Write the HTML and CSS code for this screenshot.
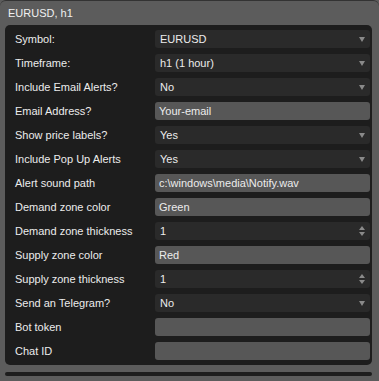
FILE: index.html
```html
<!DOCTYPE html>
<html lang="en">
<head>
  <meta charset="UTF-8">
  <title>EURUSD, h1</title>
  <link rel="stylesheet" href="styles.css">
</head>
<body>
  <div class="window">
    <div class="title">EURUSD, h1</div>

    <div class="panel">
      <div class="row"><span class="label">Symbol:</span><div class="field select"><span>EURUSD</span><i class="down"></i></div></div>
      <div class="row"><span class="label">Timeframe:</span><div class="field select"><span>h1 (1 hour)</span><i class="down"></i></div></div>
      <div class="row"><span class="label">Include Email Alerts?</span><div class="field select"><span>No</span><i class="down"></i></div></div>
      <div class="row"><span class="label">Email Address?</span><div class="field text"><span>Your-email</span></div></div>
      <div class="row"><span class="label">Show price labels?</span><div class="field select"><span>Yes</span><i class="down"></i></div></div>
      <div class="row"><span class="label">Include Pop Up Alerts</span><div class="field select"><span>Yes</span><i class="down"></i></div></div>
      <div class="row"><span class="label">Alert sound path</span><div class="field text"><span>c:\windows\media\Notify.wav</span></div></div>
      <div class="row"><span class="label">Demand zone color</span><div class="field text"><span>Green</span></div></div>
      <div class="row"><span class="label">Demand zone thickness</span><div class="field select"><span>1</span><i class="spin"><b class="up"></b><b class="dn"></b></i></div></div>
      <div class="row"><span class="label">Supply zone color</span><div class="field text"><span>Red</span></div></div>
      <div class="row"><span class="label">Supply zone thickness</span><div class="field select"><span>1</span><i class="spin"><b class="up"></b><b class="dn"></b></i></div></div>
      <div class="row"><span class="label">Send an Telegram?</span><div class="field select"><span>No</span><i class="down"></i></div></div>
      <div class="row"><span class="label">Bot token</span><div class="field text"><span></span></div></div>
      <div class="row"><span class="label">Chat ID</span><div class="field text"><span></span></div></div>
    </div>

    <div class="scrollbar"></div>
  </div>
</body>
</html>
```

FILE: styles.css
```css
* {
  margin: 0;
  padding: 0;
  box-sizing: border-box;
}

body {
  font-family: "Liberation Sans", Arial, sans-serif;
  font-size: 11px;
  color: #ececec;
  background: #5c5c5c;
}

.window {
  height: 381px;
  background: #5c5c5c;
  border-top: 1px solid #333;
  border-radius: 6px 6px 0 0;
}

.title {
  height: 24px;
  line-height: 24px;
  padding-left: 8px;
  color: #f0f0f0;
}

/* Settings panel */
.panel {
  margin: 0 7px 0 5px;
  padding: 5px 2px 5px 10px;
  background: #1d1d1d;
  border-radius: 5px;
  display: flex;
  flex-direction: column;
  gap: 6px;
}

.row {
  display: flex;
  align-items: center;
  height: 18px;
}

.label {
  width: 140px;
  flex-shrink: 0;
}

.field {
  flex: 1;
  height: 18px;
  border-radius: 3px;
  display: flex;
  align-items: center;
  justify-content: space-between;
  padding: 0 5px 0 5px;
  white-space: nowrap;
}

.select {
  background: #2a2a2a;
}

.text {
  background: #575757;
  padding-left: 4px;
}

.down {
  width: 0;
  height: 0;
  border-left: 3px solid transparent;
  border-right: 3px solid transparent;
  border-top: 5px solid #8a8a8a;
}

.spin {
  display: flex;
  flex-direction: column;
  gap: 2px;
}

.spin b {
  display: block;
  width: 0;
  height: 0;
  border-left: 3px solid transparent;
  border-right: 3px solid transparent;
}

.spin .up {
  border-bottom: 4px solid #8a8a8a;
}

.spin .dn {
  border-top: 4px solid #8a8a8a;
}

.scrollbar {
  margin: 7px 7px 0 5px;
  height: 4px;
  background: #1d1d1d;
  border-radius: 2px;
}
```
